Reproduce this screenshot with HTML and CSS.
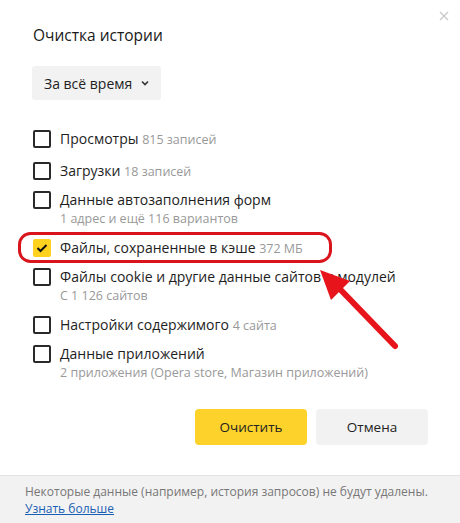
FILE: index.html
```html
<!DOCTYPE html>
<html lang="ru">
<head>
    <meta charset="UTF-8">
    <title>Очистка истории</title>
    <link rel="stylesheet" href="styles.css">
</head>
<body>
    <div class="dialog">
        <button class="close" aria-label="Закрыть">
            <svg width="10" height="10" viewBox="0 0 10 10"><path d="M1 1L9 9M9 1L1 9" stroke="#c8c8c8" stroke-width="1.2"/></svg>
        </button>

        <div class="content">
            <h1>Очистка истории</h1>

            <button class="period">
                За всё время
                <svg width="8" height="6" viewBox="0 0 8 6"><path d="M1 1.5L4 4.5L7 1.5" stroke="#333" stroke-width="1.6" fill="none"/></svg>
            </button>

            <ul class="options">
                <li class="option first">
                    <span class="box"></span>
                    <div class="text">
                        <div class="name">Просмотры <span class="count">815 записей</span></div>
                    </div>
                </li>
                <li class="option">
                    <span class="box"></span>
                    <div class="text">
                        <div class="name">Загрузки <span class="count">18 записей</span></div>
                    </div>
                </li>
                <li class="option">
                    <span class="box"></span>
                    <div class="text">
                        <div class="name">Данные автозаполнения форм</div>
                        <div class="sub">1 адрес и ещё 116 вариантов</div>
                    </div>
                </li>
                <li class="option">
                    <span class="box checked">
                        <svg width="12" height="10" viewBox="0 0 12 10"><path d="M1.5 5L4.5 8L10.5 2" stroke="#111" stroke-width="2" fill="none"/></svg>
                    </span>
                    <div class="text">
                        <div class="name">Файлы, сохраненные в кэше <span class="count">372 МБ</span></div>
                    </div>
                </li>
                <li class="option">
                    <span class="box"></span>
                    <div class="text">
                        <div class="name">Файлы cookie и другие данные сайтов и модулей</div>
                        <div class="sub">С 1 126 сайтов</div>
                    </div>
                </li>
                <li class="option">
                    <span class="box"></span>
                    <div class="text">
                        <div class="name">Настройки содержимого <span class="count">4 сайта</span></div>
                    </div>
                </li>
                <li class="option">
                    <span class="box"></span>
                    <div class="text">
                        <div class="name">Данные приложений</div>
                        <div class="sub">2 приложения (Opera store, Магазин приложений)</div>
                    </div>
                </li>
            </ul>

            <div class="actions">
                <button class="btn btn-primary">Очистить</button>
                <button class="btn">Отмена</button>
            </div>
        </div>

        <div class="footer">
            Некоторые данные (например, история запросов) не будут удалены.<br>
            <a href="#">Узнать больше</a>
        </div>

        <!-- пометка поверх скриншота -->
        <svg class="annotation" width="460" height="523" viewBox="0 0 460 523">
            <rect x="19.5" y="233.5" width="311" height="28" rx="11" fill="none" stroke="#d9141c" stroke-width="3"/>
            <path d="M395 346L336 285" stroke="#e8141c" stroke-width="6" stroke-linecap="round"/>
            <polygon points="320,270 350,281 331,300" fill="#e8141c"/>
        </svg>
    </div>
</body>
</html>
```

FILE: styles.css
```css
* {
    box-sizing: border-box;
}
body {
    margin: 0;
    font-family: "Open Sans", "Noto Sans", Arial, sans-serif;
    color: #222;
    background: #fff;
}
.dialog {
    position: relative;
    width: 460px;
    height: 523px;
    background: #fff;
    display: flex;
    flex-direction: column;
}
.close {
    position: absolute;
    top: 9px;
    right: 11px;
    border: none;
    background: none;
    padding: 0;
    cursor: pointer;
}
.content {
    flex: 1;
    padding: 0 32px;
}
h1 {
    font-size: 15.5px;
    font-weight: normal;
    margin: 24px 0 0 1px;
    line-height: 22px;
    color: #1a1a1a;
}
.period {
    display: flex;
    align-items: center;
    gap: 9px;
    margin-top: 20px;
    height: 34px;
    padding: 0 12px;
    border: none;
    border-radius: 3px;
    background: #f2f2f2;
    font-family: inherit;
    font-size: 14px;
    color: #222;
}
.options {
    list-style: none;
    margin: 25px 0 0;
    padding: 0;
}
.option {
    display: flex;
    align-items: flex-start;
    gap: 9px;
}
.option.first {
    margin-bottom: 3px;
}
.box {
    flex: none;
    width: 18px;
    height: 18px;
    margin-top: 5px;
    margin-left: 1px;
    border: 2px solid #2a2a2a;
    border-radius: 2px;
    display: flex;
    align-items: center;
    justify-content: center;
}
.box.checked {
    border: none;
    background: #ffd21f;
}
.name {
    font-size: 14px;
    line-height: 28px;
    color: #1e1e1e;
    white-space: nowrap;
}
.count {
    font-size: 12.5px;
    color: #999;
}
.sub {
    font-size: 12.5px;
    line-height: 17px;
    color: #999;
    margin-top: -4px;
    margin-bottom: 7px;
}
.actions {
    display: flex;
    justify-content: flex-end;
    gap: 9px;
    margin-top: 21px;
}
.btn {
    width: 112px;
    height: 36px;
    border: none;
    border-radius: 4px;
    background: #f2f2f2;
    font-family: inherit;
    font-size: 13.5px;
    color: #222;
    cursor: pointer;
}
.btn-primary {
    background: #fdd22a;
}
.footer {
    height: 48px;
    padding: 7px 25px 0;
    background: #f2f2f2;
    border-top: 1px solid #e3e3e3;
    font-size: 12px;
    line-height: 17px;
    color: #777;
    white-space: nowrap;
}
.footer a {
    color: #1a5fb4;
}
.annotation {
    position: absolute;
    top: 0;
    left: 0;
    pointer-events: none;
}
```
